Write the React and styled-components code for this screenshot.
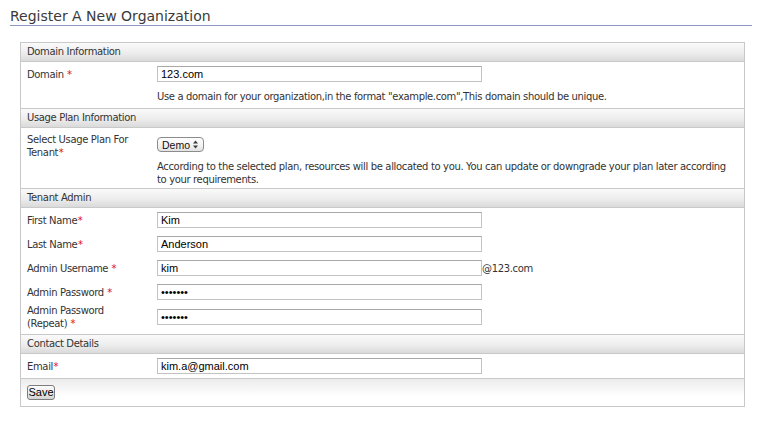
import styled, { createGlobalStyle } from 'styled-components';

const GlobalStyle = createGlobalStyle`
  html, body {
    margin: 0;
    padding: 0;
    background: #ffffff;
  }
  body {
    font-family: "DejaVu Sans", sans-serif;
    font-size: 10px;
    letter-spacing: -0.35px;
    color: #333333;
  }
`;

const Page = styled.div`
  width: 758px;
  height: 422px;
  overflow: hidden;
`;

const Title = styled.h2`
  margin: 0 6px 0 10px;
  padding-top: 7px;
  height: 18px;
  line-height: 18px;
  font-size: 14px;
  font-weight: normal;
  letter-spacing: 0;
  color: #3a3a3a;
  border-bottom: 1px solid #8e9ac4;
`;

const Form = styled.form`
  box-sizing: border-box;
  width: 725px;
  margin: 16px 0 0 20px;
  border: 1px solid #c9c9c9;
`;

const SectionHeader = styled.div`
  height: 18px;
  line-height: 18px;
  padding: 0 6px;
  color: #333333;
  background: linear-gradient(to bottom, #fafafa 0%, #ededed 55%, #dadada 100%);
  border-bottom: 1px solid #c9c9c9;

  &:not(:first-child) {
    border-top: 1px solid #c9c9c9;
  }
`;

const Body = styled.div`
  padding: ${({ $pt }) => $pt || 0}px 0 ${({ $pb }) => $pb || 0}px;
`;

const Row = styled.div`
  display: grid;
  grid-template-columns: 130px 1fr;
  align-items: center;
  min-height: 24px;
  padding-left: 6px;
`;

const Label = styled.label`
  max-width: 110px;
  line-height: 13px;
  color: #333333;
`;

const Req = styled.span`
  margin-left: 0.5px;
  letter-spacing: 0;
  color: #e01010;
`;

const Field = styled.div`
  display: flex;
  align-items: center;
`;

const TextInput = styled.input`
  box-sizing: border-box;
  width: 325px;
  height: 16px;
  margin: 0;
  padding: 0 3px;
  border: 1px solid #c2c2c2;
  border-top-color: #a8a8a8;
  font-family: "Liberation Sans", Arial, sans-serif;
  font-size: 11px;
  letter-spacing: 0;
  color: #000000;
  background: #ffffff;
  outline: none;
`;

const Suffix = styled.span`
  color: #333333;
`;

const PlanSelect = styled.div`
  box-sizing: border-box;
  display: inline-flex;
  align-items: center;
  gap: 3px;
  width: 47px;
  height: 15px;
  margin-bottom: 3px;
  padding: 0 0 0 4px;
  border: 1px solid #8c8c8c;
  border-radius: 4px;
  background: linear-gradient(to bottom, #ffffff 0%, #f1f1f1 60%, #e2e2e2 100%);
  font-family: "Liberation Sans", Arial, sans-serif;
  font-size: 10.5px;
  letter-spacing: 0;
  color: #111111;
`;

const Hint = styled.p`
  margin: ${({ $mt }) => $mt}px 8px 0 136px;
  line-height: 13px;
  color: #333333;
`;

const Footer = styled.div`
  padding: 6px;
  border-top: 1px solid #c9c9c9;
  background: linear-gradient(to bottom, #ececec 0%, #ffffff 65%);
`;

const SaveButton = styled.button`
  box-sizing: border-box;
  display: block;
  width: 28px;
  height: 15px;
  margin: 0;
  padding: 0;
  border: 1px solid #7d7d7d;
  border-radius: 3px;
  background: linear-gradient(to bottom, #fdfdfd 0%, #e9e9e9 55%, #d4d4d4 100%);
  font-family: "Liberation Sans", Arial, sans-serif;
  font-size: 11px;
  line-height: 13px;
  letter-spacing: 0;
  color: #000000;
`;

const Arrows = () => (
  <svg width="5" height="9" viewBox="0 0 5 9">
    <path d="M0 3.6 L2.5 0.4 L5 3.6 Z M0 5.4 L2.5 8.6 L5 5.4 Z" fill="#3a3a3a" />
  </svg>
);

const TextRow = ({ label, req, value, type = 'text', suffix }) => (
  <Row>
    <Label>
      {label}
      <Req>{req}</Req>
    </Label>
    <Field>
      <TextInput type={type} defaultValue={value} />
      {suffix && <Suffix>{suffix}</Suffix>}
    </Field>
  </Row>
);

export default function App() {
  return (
    <Page>
      <GlobalStyle />
      <Title>Register A New Organization</Title>
      <Form onSubmit={(e) => e.preventDefault()}>
        <SectionHeader>Domain Information</SectionHeader>
        <Body $pb={5}>
          <TextRow label="Domain " req="*" value="123.com" />
          <Hint $mt={4}>
            Use a domain for your organization,in the format "example.com",This domain should be unique.
          </Hint>
        </Body>

        <SectionHeader>Usage Plan Information</SectionHeader>
        <Body $pt={5} $pb={2}>
          <Row>
            <Label>
              Select Usage Plan For
              <br />
              Tenant<Req>*</Req>
            </Label>
            <Field>
              <PlanSelect>
                Demo
                <Arrows />
              </PlanSelect>
            </Field>
          </Row>
          <Hint $mt={1}>
            According to the selected plan, resources will be allocated to you. You can update or downgrade your
            plan later according to your requirements.
          </Hint>
        </Body>

        <SectionHeader>Tenant Admin</SectionHeader>
        <Body $pt={0} $pb={4}>
          <TextRow label="First Name" req="*" value="Kim" />
          <TextRow label="Last Name" req="*" value="Anderson" />
          <TextRow label="Admin Username " req="*" value="kim" suffix="@123.com" />
          <TextRow label="Admin Password " req="*" value="1234567" type="password" />
          <TextRow
            label={
              <>
                Admin Password
                <br />
                (Repeat){' '}
              </>
            }
            req="*"
            value="1234567"
            type="password"
          />
        </Body>

        <SectionHeader>Contact Details</SectionHeader>
        <Body $pt={0}>
          <TextRow label="Email" req="*" value="kim.a@gmail.com" />
        </Body>

        <Footer>
          <SaveButton type="submit">Save</SaveButton>
        </Footer>
      </Form>
    </Page>
  );
}
